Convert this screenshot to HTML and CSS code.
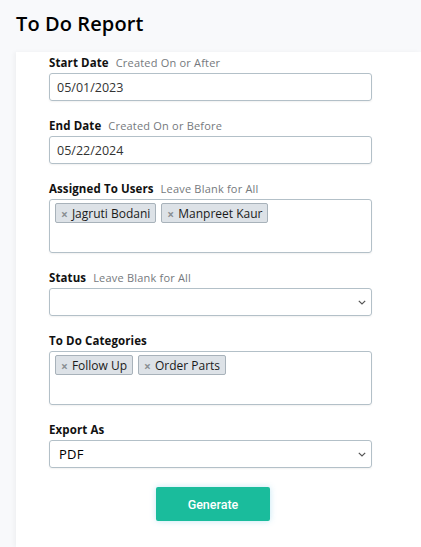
FILE: index.html
```html
<!DOCTYPE html>
<html>
<head>
<meta charset="utf-8">
<link rel="stylesheet" href="styles.css">
</head>
<body>
<h1 class="title">To Do Report</h1>
<div class="card">
  <form class="form">
    <div class="field">
      <div class="label"><b>Start Date</b><span class="hint">Created On or After</span></div>
      <div class="input">05/01/2023</div>
    </div>
    <div class="field">
      <div class="label"><b>End Date</b><span class="hint">Created On or Before</span></div>
      <div class="input">05/22/2024</div>
    </div>
    <div class="field">
      <div class="label"><b>Assigned To Users</b><span class="hint">Leave Blank for All</span></div>
      <div class="multi">
        <span class="tag"><span class="x">×</span>Jagruti Bodani</span>
        <span class="tag"><span class="x">×</span>Manpreet Kaur</span>
      </div>
    </div>
    <div class="field">
      <div class="label"><b>Status</b><span class="hint">Leave Blank for All</span></div>
      <div class="input select"><span></span>
        <svg class="chev" width="8" height="5" viewBox="0 0 8 5"><path d="M0.8 0.8l3.2 3.2L7.2 0.8" fill="none" stroke="#555" stroke-width="1.2"/></svg>
      </div>
    </div>
    <div class="field">
      <div class="label"><b>To Do Categories</b></div>
      <div class="multi">
        <span class="tag"><span class="x">×</span>Follow Up</span>
        <span class="tag"><span class="x">×</span>Order Parts</span>
      </div>
    </div>
    <div class="field">
      <div class="label"><b>Export As</b></div>
      <div class="input select dark"><span>PDF</span>
        <svg class="chev" width="8" height="5" viewBox="0 0 8 5"><path d="M0.8 0.8l3.2 3.2L7.2 0.8" fill="none" stroke="#555" stroke-width="1.2"/></svg>
      </div>
    </div>
    <div class="actions">
      <button type="button" class="btn">Generate</button>
    </div>
  </form>
</div>
</body>
</html>
```
FILE: styles.css
```css
html, body {
  margin: 0;
  padding: 0;
}
body {
  background: #f8f9fb;
  font-family: "Open Sans", "Liberation Sans", sans-serif;
  color: #111;
  overflow: hidden;
  height: 547px;
  display: flex;
  flex-direction: column;
}
.title {
  margin: 0;
  padding: 11px 16px 0;
  height: 52px;
  flex: none;
  box-sizing: border-box;
  font-size: 20px;
  font-weight: 600;
  letter-spacing: 0.1px;
  line-height: 26px;
  color: #000;
}
.card {
  flex: 1;
  margin-left: 16px;
  background: #fff;
  box-shadow: -2px 0 4px rgba(0,0,0,0.04);
  padding: 2px 0 0 33px;
}
.form {
  width: 323px;
}
.field {
  margin-bottom: 16px;
}
.label {
  height: 18px;
  line-height: 18px;
  margin-bottom: 1px;
  font-size: 11.5px;
  white-space: nowrap;
}
.label b {
  font-weight: 700;
  color: #111;
  letter-spacing: 0.1px;
}
.hint {
  color: #75797d;
  margin-left: 7px;
  font-size: 11px;
  letter-spacing: 0.2px;
}
.input {
  height: 28px;
  box-sizing: border-box;
  border: 1px solid #b3c0c8;
  border-radius: 3px;
  box-shadow: 0 1px 2px rgba(0,0,0,0.06);
  padding: 0 7px;
  display: flex;
  align-items: center;
  font-size: 12.5px;
  color: #333;
}
.select {
  justify-content: space-between;
  padding-right: 5px;
}
.dark {
  color: #000;
  padding-left: 9px;
  font-size: 13px;
  letter-spacing: 0.3px;
}
.multi {
  height: 54px;
  box-sizing: border-box;
  border: 1px solid #b3c0c8;
  border-radius: 3px;
  box-shadow: 0 1px 2px rgba(0,0,0,0.06);
  padding: 3px 5px;
  display: flex;
  align-items: flex-start;
  gap: 5px;
}
.tag {
  display: inline-flex;
  align-items: center;
  height: 20px;
  box-sizing: border-box;
  background: #dde2e7;
  border: 1px solid #a8b2ba;
  border-radius: 2px;
  padding: 0 5px 0 5px;
  font-size: 12px;
  color: #1a1a1a;
}
.x {
  color: #8a8f94;
  font-size: 12px;
  font-weight: 700;
  margin-right: 4px;
  line-height: 1;
  position: relative;
  top: 1.5px;
}
.actions {
  display: flex;
  justify-content: center;
  padding-left: 5px;
  margin-top: 19px;
}
.field:last-of-type {
  margin-bottom: 0;
}
.btn {
  width: 114px;
  height: 34px;
  border: none;
  border-radius: 2px;
  background: #1abc9c;
  color: #fff;
  font-family: Roboto, "Liberation Sans", sans-serif;
  font-size: 12.5px;
  font-weight: 500;
  box-shadow: 0 0 6px rgba(120,200,230,0.45);
}
```
